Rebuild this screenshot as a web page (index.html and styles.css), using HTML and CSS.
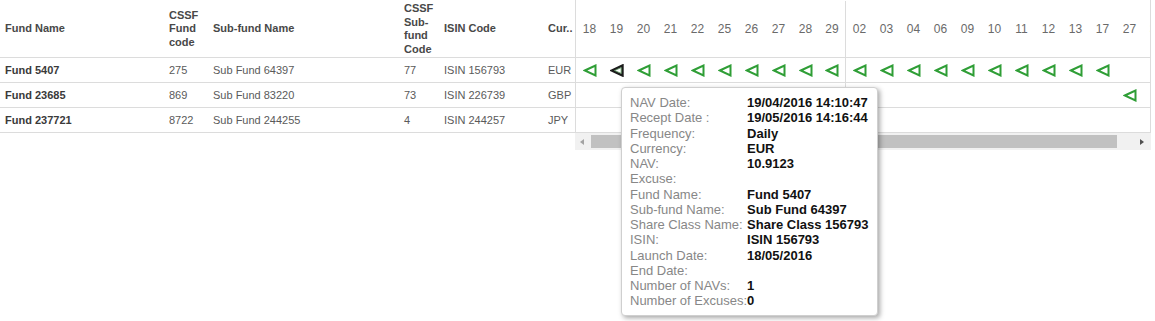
FILE: index.html
```html
<!DOCTYPE html>
<html>
<head>
<meta charset="utf-8">
<link rel="stylesheet" href="styles.css">
</head>
<body>
<div class="grid">
  <div class="locked">
    <div class="lrow head">
      <div class="c w-fund">Fund Name</div>
      <div class="c w-code">CSSF<br>Fund<br>code</div>
      <div class="c w-sub">Sub-fund Name</div>
      <div class="c w-scode">CSSF<br>Sub-<br>fund<br>Code</div>
      <div class="c w-isin">ISIN Code</div>
      <div class="c w-cur">Cur..</div>
    </div>
    <div class="lrow">
      <div class="c w-fund b">Fund 5407</div>
      <div class="c w-code">275</div>
      <div class="c w-sub">Sub Fund 64397</div>
      <div class="c w-scode">77</div>
      <div class="c w-isin">ISIN 156793</div>
      <div class="c w-cur">EUR</div>
    </div>
    <div class="lrow">
      <div class="c w-fund b">Fund 23685</div>
      <div class="c w-code">869</div>
      <div class="c w-sub">Sub Fund 83220</div>
      <div class="c w-scode">73</div>
      <div class="c w-isin">ISIN 226739</div>
      <div class="c w-cur">GBP</div>
    </div>
    <div class="lrow">
      <div class="c w-fund b">Fund 237721</div>
      <div class="c w-code">8722</div>
      <div class="c w-sub">Sub Fund 244255</div>
      <div class="c w-scode">4</div>
      <div class="c w-isin">ISIN 244257</div>
      <div class="c w-cur">JPY</div>
    </div>
  </div>
  <div class="scroller">
    <div class="dates">
      <div class="drow head" id="dhead"></div>
      <div class="drow" id="r1"></div>
      <div class="drow" id="r2"></div>
      <div class="drow" id="r3"></div>
    </div>
    <div class="hscroll">
      <div class="arr-l"></div>
      <div class="thumb"></div>
      <div class="arr-r"></div>
    </div>
  </div>
</div>

<div class="tip">
  <table>
    <tr><td class="k">NAV Date:</td><td class="v">19/04/2016 14:10:47</td></tr>
    <tr><td class="k">Recept Date :</td><td class="v">19/05/2016 14:16:44</td></tr>
    <tr><td class="k">Frequency:</td><td class="v">Daily</td></tr>
    <tr><td class="k">Currency:</td><td class="v">EUR</td></tr>
    <tr><td class="k">NAV:</td><td class="v">10.9123</td></tr>
    <tr><td class="k">Excuse:</td><td class="v"></td></tr>
    <tr><td class="k">Fund Name:</td><td class="v">Fund 5407</td></tr>
    <tr><td class="k">Sub-fund Name:</td><td class="v">Sub Fund 64397</td></tr>
    <tr><td class="k">Share Class Name:</td><td class="v">Share Class 156793</td></tr>
    <tr><td class="k">ISIN:</td><td class="v">ISIN 156793</td></tr>
    <tr><td class="k">Launch Date:</td><td class="v">18/05/2016</td></tr>
    <tr><td class="k">End Date:</td><td class="v"></td></tr>
    <tr><td class="k">Number of NAVs:</td><td class="v">1</td></tr>
    <tr><td class="k">Number of Excuses:</td><td class="v">0</td></tr>
  </table>
</div>

<script>
(function () {
  var days = ["18","19","20","21","22","25","26","27","28","29","02","03","04","06","09","10","11","12","13","17","27","30"];
  var tri = '<svg class="tri" width="14" height="13" viewBox="0 0 14 13"><polygon points="1.8,6.5 12.5,1.5 12.5,11.5" fill="none" stroke="#2f9e36" stroke-width="2" stroke-linejoin="miter"/></svg>';
  var triSel = '<svg class="tri" width="14" height="13" viewBox="0 0 14 13"><polygon points="1.8,6.5 12.5,1.5 12.5,11.5" fill="none" stroke="#1c1c1c" stroke-width="2.4"/><polygon points="4.5,6.5 11.2,3.6 11.2,9.4" fill="none" stroke="#4e8a52" stroke-width="0.8"/></svg>';
  function cell(i, html) {
    return '<div class="d' + (i === 9 ? ' sep' : '') + '">' + (html || '') + '</div>';
  }
  var h = '', a = '', b = '', c = '';
  for (var i = 0; i < days.length; i++) {
    h += cell(i, days[i]);
    a += cell(i, i < 20 ? (i === 1 ? triSel : tri) : '');
    b += cell(i, i === 20 ? tri : '');
    c += cell(i, i === 21 ? tri : '');
  }
  document.getElementById('dhead').innerHTML = h;
  document.getElementById('r1').innerHTML = a;
  document.getElementById('r2').innerHTML = b;
  document.getElementById('r3').innerHTML = c;
})();
</script>
</body>
</html>
```

FILE: styles.css
```css
html, body {
  margin: 0;
  padding: 0;
  background: #fff;
}
body {
  font-family: "Liberation Sans", Arial, sans-serif;
  width: 1155px;
  height: 321px;
  overflow: hidden;
  position: relative;
}
.grid {
  display: flex;
  align-items: flex-start;
}
.locked {
  width: 575px;
  flex: none;
}
.lrow {
  display: flex;
  height: 24px;
  border-bottom: 1px solid #dcdcdc;
  align-items: center;
  font-size: 11px;
  color: #5a5a5a;
}
.lrow.head {
  height: 56px;
  padding-top: 1px;
  font-weight: bold;
  color: #484848;
  line-height: 13.5px;
}
.c {
  padding-left: 5px;
  box-sizing: border-box;
  white-space: nowrap;
}
.b {
  font-weight: bold;
  color: #3a3a3a;
}
.w-fund { width: 164px; }
.w-code { width: 44px; }
.w-sub { width: 191px; }
.w-scode { width: 40px; }
.w-isin { width: 104px; }
.w-cur { width: 32px; }

.scroller {
  width: 576px;
  flex: none;
}
.dates {
  border-left: 1px solid #dcdcdc;
  border-right: 1px solid #dcdcdc;
  overflow: hidden;
  box-sizing: border-box;
  width: 576px;
}
.drow {
  display: flex;
  height: 24px;
  border-bottom: 1px solid #dcdcdc;
  width: 700px;
}
.drow.head {
  height: 56px;
  padding-top: 1px;
  font-size: 12px;
  color: #6a6a6a;
}
.d {
  width: 27px;
  flex: none;
  box-sizing: border-box;
  display: flex;
  align-items: center;
  justify-content: center;
}
.d.sep {
  border-right: 1px solid #dcdcdc;
}
.tri {
  display: block;
}

.hscroll {
  height: 17px;
  background: #f1f1f1;
  display: flex;
  align-items: center;
}
.arr-l {
  width: 0;
  height: 0;
  border-top: 3.5px solid transparent;
  border-bottom: 3.5px solid transparent;
  border-right: 4px solid #a3a3a3;
  margin-left: 5px;
  margin-right: 7px;
}
.thumb {
  width: 526px;
  height: 13px;
  background: #c1c1c1;
}
.arr-r {
  width: 0;
  height: 0;
  border-top: 3.5px solid transparent;
  border-bottom: 3.5px solid transparent;
  border-left: 4px solid #505050;
  margin-left: 23px;
}

.tip {
  position: absolute;
  left: 621px;
  top: 87px;
  width: 257px;
  box-sizing: border-box;
  background: #fff;
  border: 1px solid #cfcfcf;
  border-radius: 4px;
  box-shadow: 2px 2px 5px rgba(0, 0, 0, 0.35);
  padding: 7px 8px 6px 8px;
  font-size: 13px;
}
.tip table {
  border-collapse: collapse;
  border-spacing: 0;
}
.tip td {
  padding: 0;
  line-height: 15.25px;
  height: 15.25px;
  white-space: nowrap;
  vertical-align: top;
}
.tip .k {
  color: #878787;
}
.tip .v {
  color: #111;
  font-weight: bold;
}
```
